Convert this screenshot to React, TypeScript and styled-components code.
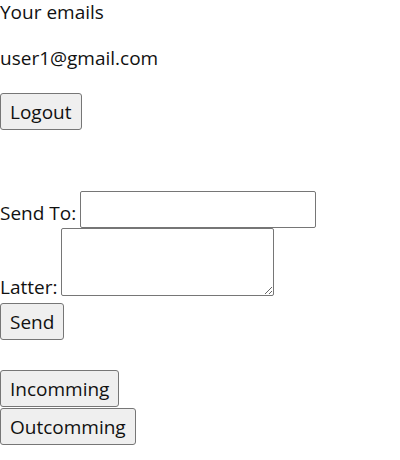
import React from "react";
import styled, { createGlobalStyle } from "styled-components";

const GlobalStyle = createGlobalStyle`
  body {
    margin: 0;
    background: #ffffff;
    color: #111111;
    font-family: "Open Sans", "Noto Sans", sans-serif;
    font-size: 19px;
  }
`;

const App = () => {
  return (
    <>
      <GlobalStyle />
      <Page>
        <Title>Your emails</Title>
        <Email>user1@gmail.com</Email>
        <Button>Logout</Button>
        <Form>
          <Row>
            <Label>Send To:</Label>
            <Input type="text" />
          </Row>
          <Row $bottom>
            <Label>Latter:</Label>
            <TextArea />
          </Row>
          <Button>Send</Button>
        </Form>
        <Folders>
          <Button>Incomming</Button>
          <Button>Outcomming</Button>
        </Folders>
      </Page>
    </>
  );
};

export default App;

const Page = styled.div`
  display: flex;
  flex-direction: column;
  align-items: flex-start;
`;

const Title = styled.div`
  line-height: 24px;
`;

const Email = styled.div`
  line-height: 24px;
  margin-top: 22px;
  margin-bottom: 23px;
`;

const Button = styled.button`
  font-family: inherit;
  font-size: 19px;
  line-height: 24px;
  color: #111111;
  background: #efefef;
  border: 1px solid #767676;
  border-radius: 3px;
  padding: 5px 9px;
  margin: 0;
  height: 37px;
`;

const Form = styled.div`
  display: flex;
  flex-direction: column;
  align-items: flex-start;
  margin-top: 61px;
`;

const Row = styled.div<{ $bottom?: boolean }>`
  display: flex;
  align-items: ${(p) => (p.$bottom ? "flex-end" : "center")};
  gap: 4px;
  margin-bottom: ${(p) => (p.$bottom ? "7px" : "0")};
`;

const Label = styled.span`
  line-height: 24px;
  position: relative;
  top: 3px;
`;

const Input = styled.input`
  width: 236px;
  height: 37px;
  box-sizing: border-box;
  border: 1px solid #767676;
  border-radius: 2px;
  padding: 0;
  margin: 0;
`;

const TextArea = styled.textarea`
  width: 213px;
  height: 68px;
  box-sizing: border-box;
  border: 1px solid #767676;
  border-radius: 2px;
  padding: 0;
  margin: 0;
`;

const Folders = styled.div`
  display: flex;
  flex-direction: column;
  align-items: flex-start;
  margin-top: 30px;
  gap: 1px;
`;
